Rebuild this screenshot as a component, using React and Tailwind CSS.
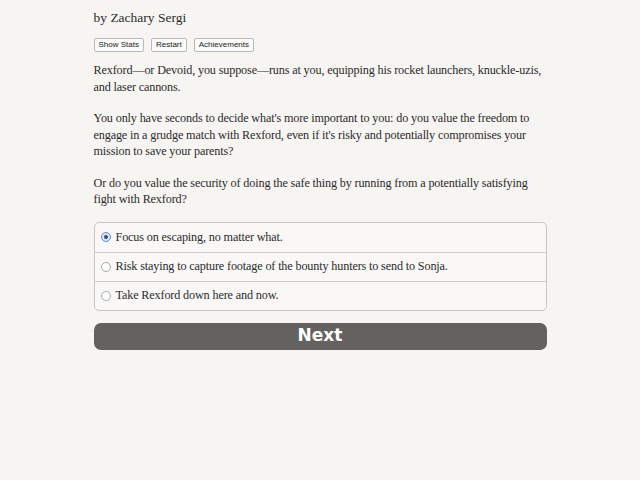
const choices = [
  'Focus on escaping, no matter what.',
  'Risk staying to capture footage of the bounty hunters to send to Sonja.',
  'Take Rexford down here and now.',
];

const Radio = ({ checked }) => (
  <span
    className={`flex h-[10px] w-[10px] shrink-0 items-center justify-center rounded-full border ${
      checked ? 'border-[#5b8fc9] bg-[#dbe8f6]' : 'border-[#a8a8a8] bg-white'
    }`}
  >
    {checked && <span className="h-[4px] w-[4px] rounded-full bg-[#2c4f7c]" />}
  </span>
);

export default function App() {
  return (
    <div className="min-h-[480px] bg-[#f7f5f2] font-['Liberation_Serif',serif] text-[#2b2b2b]">
      <div className="mx-auto w-[453px] pt-[9px]">
        <h2 className="text-[13.5px] leading-[18px]">by Zachary Sergi</h2>
        <div className="mt-[11px] flex gap-[7px] font-['Liberation_Sans',sans-serif] text-[8px] leading-[10px]">
          {['Show Stats', 'Restart', 'Achievements'].map((label) => (
            <button
              key={label}
              className="rounded-[2px] border border-[#b9b9b9] bg-[#fbfbfb] px-[4px] py-[1px] text-[#222]"
            >
              {label}
            </button>
          ))}
        </div>

        <div className="mt-[10px] space-y-[15px] text-[12.2px] leading-[16.5px] tracking-[-0.15px]">
          <p>
            Rexford—or Devoid, you suppose—runs at you, equipping his rocket launchers, knuckle-uzis,
            and laser cannons.
          </p>
          <p>
            You only have seconds to decide what's more important to you: do you value the freedom to
            engage in a grudge match with Rexford, even if it's risky and potentially compromises your
            mission to save your parents?
          </p>
          <p>
            Or do you value the security of doing the safe thing by running from a potentially satisfying
            fight with Rexford?
          </p>
        </div>

        <div className="mt-[14px] rounded-[5px] border border-[#c9c6c2] bg-[#f9f8f6]">
          {choices.map((text, i) => (
            <label
              key={text}
              className={`flex h-[29px] items-center gap-[5px] px-[6px] text-[12.2px] tracking-[-0.15px] ${
                i > 0 ? 'border-t border-[#cfccc8]' : ''
              }`}
            >
              <Radio checked={i === 0} />
              <span>{text}</span>
            </label>
          ))}
        </div>

        <button className="mt-[12px] flex h-[27px] w-full items-center justify-center rounded-[7px] bg-[#636261] font-['DejaVu_Sans',sans-serif] text-[17px] font-bold text-white">
          Next
        </button>
      </div>
    </div>
  );
}
